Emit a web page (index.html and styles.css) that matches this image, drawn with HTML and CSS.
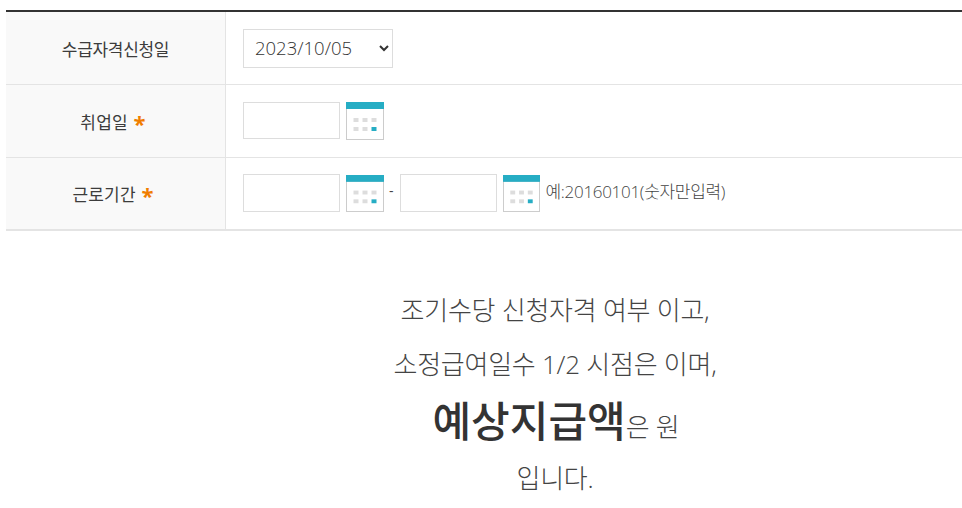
FILE: index.html
```html
<!DOCTYPE html>
<html lang="ko">
<head>
    <meta charset="UTF-8">
    <title>조기수당</title>
    <link rel="stylesheet" href="styles.css">
</head>
<body>
    <svg class="defs" width="0" height="0">
        <symbol id="cal" viewBox="0 0 38 38" preserveAspectRatio="none">
            <rect x="0" y="0" width="38" height="38" fill="#ccc"/>
            <rect x="1" y="7" width="36" height="30" fill="#fff"/>
            <rect x="0" y="0" width="38" height="7" fill="#26adc4"/>
            <rect x="7.5" y="16" width="5" height="4" fill="#ddd"/>
            <rect x="16.5" y="16" width="5" height="4" fill="#ddd"/>
            <rect x="25.5" y="16" width="5" height="4" fill="#ddd"/>
            <rect x="7.5" y="25" width="5" height="4" fill="#ddd"/>
            <rect x="16.5" y="25" width="5" height="4" fill="#ddd"/>
            <rect x="25.5" y="25" width="5" height="4" fill="#26adc4"/>
        </symbol>
    </svg>

    <table class="form">
        <tr class="r1">
            <th>수급자격신청일</th>
            <td>
                <select class="sel"><option>2023/10/05</option></select>
            </td>
        </tr>
        <tr class="r2">
            <th><span class="lbl">취업일 <span class="req">*</span></span></th>
            <td>
                <div class="line">
                    <input class="ipt" type="text">
                    <svg class="cal"><use href="#cal"/></svg>
                </div>
            </td>
        </tr>
        <tr class="r3">
            <th><span class="lbl">근로기간 <span class="req">*</span></span></th>
            <td>
                <div class="line">
                    <input class="ipt" type="text">
                    <svg class="cal"><use href="#cal"/></svg>
                    <span class="dash">-</span>
                    <input class="ipt" type="text">
                    <svg class="cal cal2"><use href="#cal"/></svg>
                    <span class="hint">예:20160101(숫자만입력)</span>
                </div>
            </td>
        </tr>
    </table>

    <div class="result">
        <p class="msg">조기수당 신청자격 여부 이고,</p>
        <p class="msg">소정급여일수 1/2 시점은 이며,</p>
        <p class="msg big"><strong>예상지급액</strong>은 원</p>
        <p class="msg">입니다.</p>
    </div>
</body>
</html>
```

FILE: styles.css
```css
* {
    box-sizing: border-box;
}
body {
    margin: 0;
    padding: 10px 0 0 6px;
    font-family: "Open Sans", "Noto Sans CJK KR", sans-serif;
    color: #444;
    background: #fff;
}
.defs {
    position: absolute;
}
.form {
    width: 956px;
    border-collapse: separate;
    border-spacing: 0;
    border-top: 2px solid #333;
    border-bottom: 2px solid #e4e4e4;
    table-layout: fixed;
}
.form th {
    width: 220px;
    background: #f9f9f9;
    border-right: 1px solid #e4e4e4;
    border-bottom: 1px solid #e4e4e4;
    font-size: 17px;
    font-weight: 400;
    letter-spacing: -0.3px;
    color: #3c3c3c;
    padding: 0;
}
.form td {
    border-bottom: 1px solid #e4e4e4;
    padding: 0 0 0 17px;
}
.form tr:last-child th,
.form tr:last-child td {
    border-bottom: 0;
}
.r1 {
    height: 73px;
}
.r2 {
    height: 73px;
}
.r3 {
    height: 71px;
}
.lbl {
    padding-right: 5px;
    letter-spacing: 0.2px;
}
.req {
    color: #f07d00;
    font-size: 22px;
    font-weight: 700;
    line-height: 16px;
    vertical-align: -3px;
    margin-left: 1px;
}
.sel {
    display: block;
    width: 150px;
    height: 39px;
    border: 1px solid #ddd;
    background: #fff;
    padding: 0 14px 2px 7px;
    font-family: inherit;
    font-size: 18.5px;
    font-weight: 300;
    color: #333;
}
.line {
    display: flex;
    align-items: flex-start;
}
.ipt {
    width: 97px;
    height: 37px;
    border: 1px solid #ddd;
    background: #fff;
    padding: 0;
}
.r3 .line {
    margin-top: -2px;
}
.r3 .ipt {
    height: 38px;
}
.cal {
    width: 38px;
    height: 38px;
    margin-left: 6px;
    flex: none;
}
.r3 .cal {
    height: 37px;
    margin-top: 1px;
}
.r3 .cal2 {
    width: 37px;
}
.dash {
    font-size: 14px;
    line-height: 34px;
    margin: 0 6px 0 5px;
}
.hint {
    font-size: 17px;
    font-weight: 300;
    line-height: 36px;
    letter-spacing: -0.3px;
    margin-left: 6px;
}
.result {
    width: 956px;
    padding: 62px 0 0 142px;
    text-align: center;
}
.msg {
    margin: 0;
    font-size: 26px;
    font-weight: 300;
    line-height: 34px;
    margin-bottom: 20px;
    letter-spacing: -0.25px;
}
.big {
    line-height: 48px;
    margin-top: -4px;
    margin-bottom: 10px;
    padding-left: 2px;
}
.big strong {
    font-size: 42px;
    font-weight: 500;
    letter-spacing: 0;
    color: #333;
}
```
